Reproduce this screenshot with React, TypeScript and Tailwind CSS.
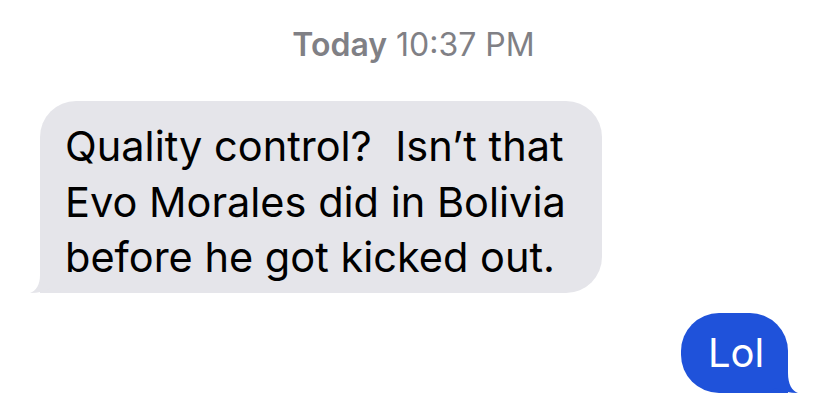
export default function App() {
  return (
    <div className="relative flex h-[405px] w-[817px] flex-col overflow-hidden bg-white font-['Inter','Liberation_Sans',sans-serif]">
      <div className="mt-[26px] pl-[10px] text-center text-[32px] leading-[38px] text-[#808085]">
        <span className="font-semibold">Today</span> 10:37 PM
      </div>

      <div className="relative ml-[40px] mt-[37px] h-[192px] w-[562px] rounded-[36px] rounded-bl-none bg-[#e5e5ea] pl-[25px] pt-[18px] text-[41.5px] leading-[55.5px] text-black">
        <svg
          className="absolute bottom-0 left-[-10px]"
          width="50"
          height="30"
          viewBox="0 0 50 30"
        >
          <path
            d="M10 0 L10 12 C10 22 6 28 0 30 C8 30 16 28 22 25 C27 28 32 30 38 30 L50 30 L50 0 Z"
            fill="#e5e5ea"
          />
        </svg>
        <div className="relative">
          <p>Quality control?{"\u00a0 "}Isn’t that</p>
          <p>Evo Morales did in Bolivia</p>
          <p>before he got kicked out.</p>
        </div>
      </div>

      <div className="relative mr-[29px] mt-[20px] flex h-[80px] w-[107px] items-center self-end rounded-[38px] rounded-br-none bg-[#1f52da] pl-[27px] text-[40px] text-white">
        <svg
          className="absolute bottom-0 right-[-10px]"
          width="50"
          height="32"
          viewBox="0 0 50 32"
        >
          <path
            d="M40 0 L40 12 C40 23 44 30 50 32 C42 32 34 30 28 27 C23 30 18 32 12 32 L0 32 L0 0 Z"
            fill="#1f52da"
          />
        </svg>
        <span className="relative">Lol</span>
      </div>
    </div>
  );
}
